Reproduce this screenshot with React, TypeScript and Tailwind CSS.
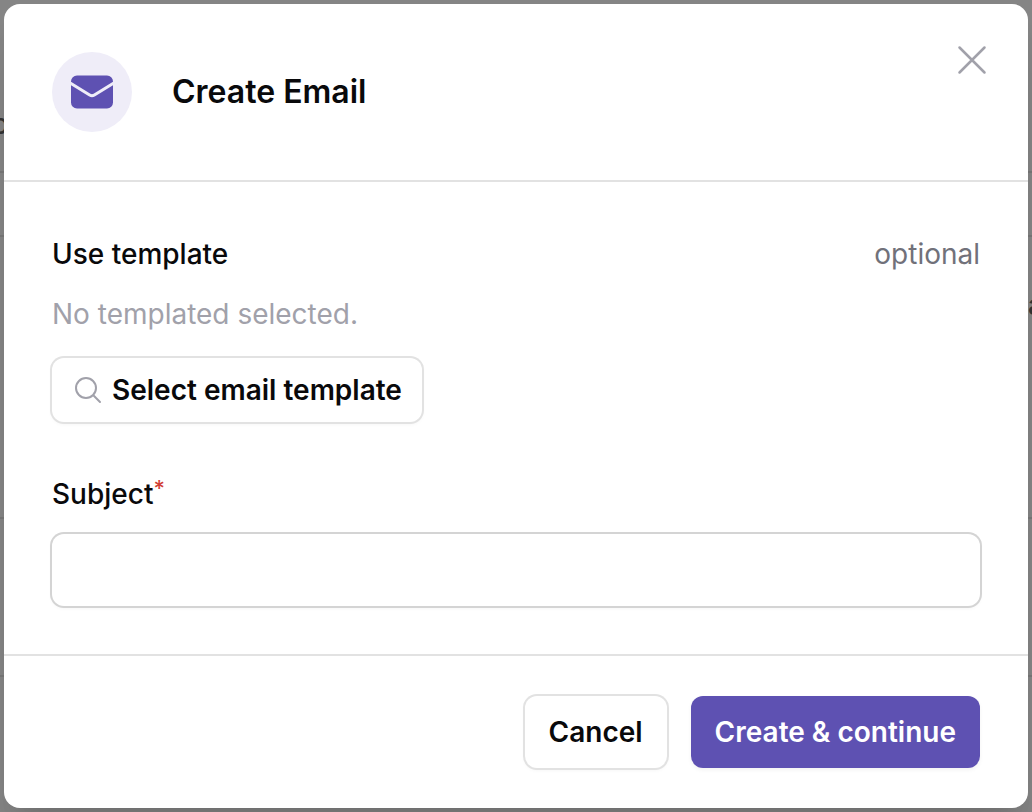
import { useState } from "react";
import { HiEnvelope } from "react-icons/hi2";

const outlineButton =
  "inline-flex items-center rounded-xl bg-white font-semibold text-[#09090b] shadow-[0_2px_4px_rgba(0,0,0,0.05)] ring-2 ring-[#e2e2e2]";

function SearchIcon() {
  return (
    <svg viewBox="0 0 24 24" className="size-8 text-[#a1a1aa]" fill="none" stroke="currentColor" strokeWidth="1.5" strokeLinecap="round" strokeLinejoin="round" aria-hidden="true">
      <path d="m21 21-5.197-5.197m0 0A7.5 7.5 0 1 0 5.196 5.196a7.5 7.5 0 0 0 10.607 10.607Z" />
    </svg>
  );
}

function CloseIcon() {
  return (
    <svg viewBox="0 0 24 24" className="size-12" fill="none" stroke="currentColor" strokeWidth="1.25" strokeLinecap="round" strokeLinejoin="round" aria-hidden="true">
      <path d="M5.75 18.25 18.25 5.75M5.75 5.75l12.5 12.5" />
    </svg>
  );
}

function PageBehind() {
  return (
    <div className="absolute inset-0 flex flex-col overflow-hidden text-[#333333]" aria-hidden="true">
      <div className="h-[173px] border-b-2 border-[#777777]" />
      <div className="h-16 border-b-2 border-[#777777]" />
      <div className="h-[282px] border-b-2 border-[#777777]" />
      <div className="h-[158px] border-b-2 border-[#777777]" />
      <span className="absolute top-[104px] -left-2 font-medium">o</span>
      <span className="absolute top-[285px] -right-3 font-semibold">a</span>
    </div>
  );
}

export default function App() {
  const [subject, setSubject] = useState("");

  return (
    <div className="relative min-h-screen overflow-hidden bg-[#858585] p-1 font-['Inter',sans-serif] text-[28px] leading-10 text-[#09090b]">
      <PageBehind />

      <div
        role="dialog"
        aria-modal="true"
        aria-labelledby="dialog-title"
        className="relative rounded-2xl bg-white shadow-[0_40px_50px_-10px_rgba(0,0,0,0.1),0_16px_20px_-12px_rgba(0,0,0,0.1)]"
      >
        <header className="flex items-center gap-10 border-b-2 border-[#e2e2e2] p-12">
          <span className="flex size-20 items-center justify-center rounded-full bg-[#efedf8]">
            <HiEnvelope className="size-12 text-[#5e51b2]" aria-hidden="true" />
          </span>
          <h1 id="dialog-title" className="text-[32px] leading-12 font-semibold">Create Email</h1>
          <button type="button" aria-label="Close" className="absolute top-8 right-8 text-[#a1a1aa]">
            <CloseIcon />
          </button>
        </header>

        <form id="email-form" className="p-12" onSubmit={(event) => event.preventDefault()}>
          <div className="flex justify-between leading-12">
            <h2 className="font-medium">Use template</h2>
            <span className="text-[#71717a]">optional</span>
          </div>
          <p className="mt-4 text-[#a1a1aa]">No templated selected.</p>
          <button type="button" className={`${outlineButton} mt-6 gap-2 px-5 py-3`}>
            <SearchIcon />
            Select email template
          </button>

          <label htmlFor="subject" className="mt-12 flex leading-12 font-medium">
            Subject
            <span className="text-[22px] leading-9 text-[#d13f36]">*</span>
          </label>
          <input
            id="subject"
            type="text"
            required
            value={subject}
            onChange={(event) => setSubject(event.target.value)}
            className="mt-4 block w-full rounded-xl bg-white px-6 py-4 shadow-[0_2px_4px_rgba(0,0,0,0.05)] ring-2 ring-[#d4d4d4] outline-none"
          />
        </form>

        <footer className="flex justify-end gap-6 border-t-2 border-[#e2e2e2] px-12 py-10">
          <button type="button" className={`${outlineButton} px-6 py-4`}>Cancel</button>
          <button
            type="submit"
            form="email-form"
            className="rounded-xl bg-[#5e51b2] px-6 py-4 font-semibold text-white shadow-[0_2px_4px_rgba(0,0,0,0.05)]"
          >
            Create &amp; continue
          </button>
        </footer>
      </div>
    </div>
  );
}
